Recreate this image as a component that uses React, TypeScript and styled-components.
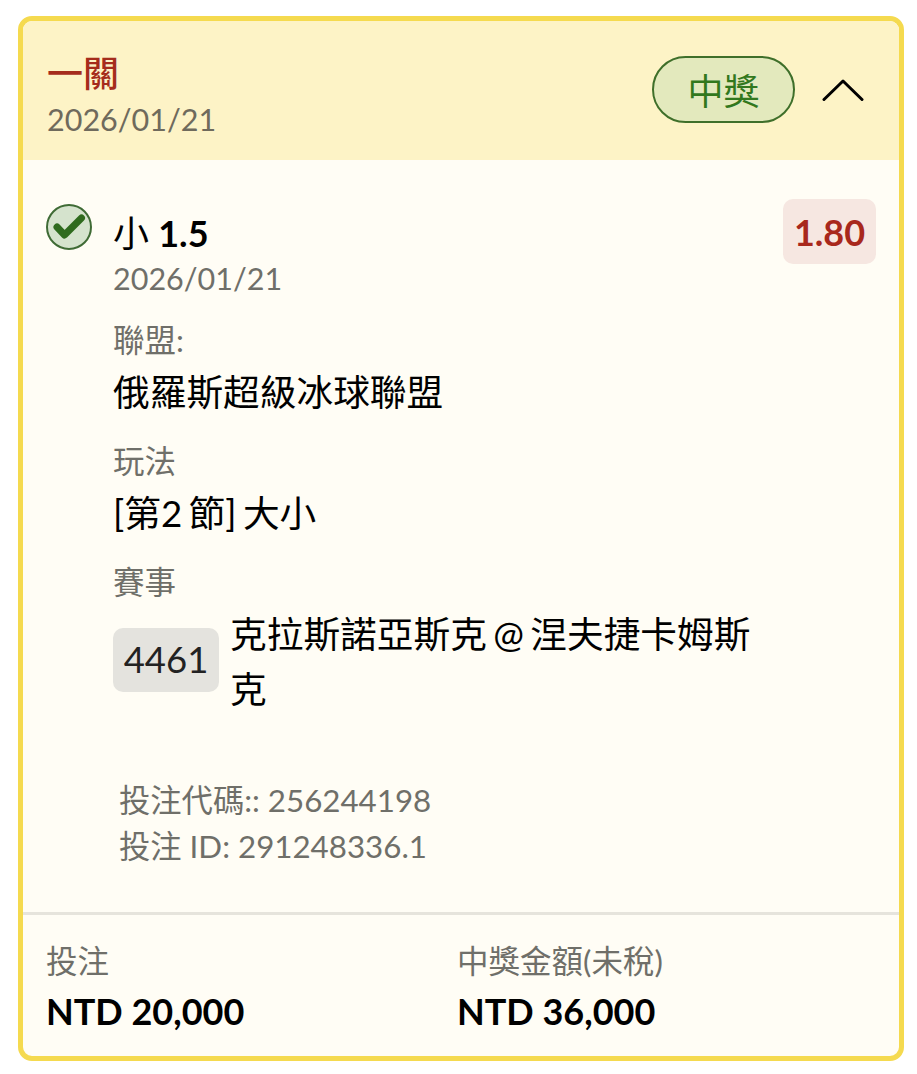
import React from 'react';
import styled, { createGlobalStyle } from 'styled-components';

const GlobalStyle = createGlobalStyle`
  html, body {
    margin: 0;
    padding: 0;
    background: #fff;
    font-family: Lato, "Noto Sans CJK TC", sans-serif;
  }
`;

const App = () => (
  <>
    <GlobalStyle />
    <Page>
      <Card>
        <Header>
          <div>
            <Title>一關</Title>
            <HeaderDate>2026/01/21</HeaderDate>
          </div>
          <HeaderRight>
            <StatusPill>中獎</StatusPill>
            <svg width="42" height="24" viewBox="0 0 42 24" fill="none">
              <path d="M2 21.5 L21 3 L40 21.5" stroke="#000" strokeWidth="3" strokeLinecap="round" strokeLinejoin="round" />
            </svg>
          </HeaderRight>
        </Header>
        <Body>
          <Selection>
            <CheckIcon width="46" height="46" viewBox="0 0 46 46">
              <circle cx="23" cy="23" r="22" fill="#d5e3cd" stroke="#3f6b35" strokeWidth="2" />
              <path d="M11 23 L18.5 31 L35.5 14" fill="none" stroke="#2f6b1e" strokeWidth="7" strokeLinecap="round" strokeLinejoin="round" />
            </CheckIcon>
            <SelectionText>
              <Pick>
                小 <b>1.5</b>
              </Pick>
              <SubDate>2026/01/21</SubDate>
            </SelectionText>
            <Odds>1.80</Odds>
          </Selection>
          <Details>
            <Field>
              <Label>聯盟:</Label>
              <Value>俄羅斯超級冰球聯盟</Value>
            </Field>
            <Field>
              <Label>玩法</Label>
              <Value>[第2 節] 大小</Value>
            </Field>
            <Field>
              <Label>賽事</Label>
              <EventRow>
                <EventCode>4461</EventCode>
                <EventName>克拉斯諾亞斯克 @ 涅夫捷卡姆斯克</EventName>
              </EventRow>
            </Field>
          </Details>
          <Codes>
            <div>投注代碼:: 256244198</div>
            <div>投注 ID: 291248336.1</div>
          </Codes>
        </Body>
        <Footer>
          <Amount>
            <Label>投注</Label>
            <Money>NTD 20,000</Money>
          </Amount>
          <Amount>
            <Label>中獎金額(未稅)</Label>
            <Money>NTD 36,000</Money>
          </Amount>
        </Footer>
      </Card>
    </Page>
  </>
);

const Page = styled.div`
  box-sizing: border-box;
  width: 917px;
  height: 1074px;
  padding: 16px 13px 13px 18px;
  overflow: hidden;
`;

const Card = styled.section`
  box-sizing: border-box;
  height: 1045px;
  border: 5px solid #f5da4f;
  border-radius: 14px;
  background: #fffdf5;
  overflow: hidden;
  display: flex;
  flex-direction: column;
`;

const Header = styled.header`
  box-sizing: border-box;
  height: 139px;
  flex: none;
  display: flex;
  align-items: flex-start;
  justify-content: space-between;
  padding: 29px 35px 0 24px;
  background: #fdf3c6;
`;

const Title = styled.div`
  font-size: 36px;
  line-height: 46px;
  font-weight: 500;
  color: #a52c1c;
`;

const HeaderDate = styled.div`
  font-size: 30.5px;
  line-height: 40px;
  margin-top: 3px;
  color: #6f6a5c;
`;

const HeaderRight = styled.div`
  display: flex;
  align-items: center;
  gap: 27px;
  margin-top: 6px;
`;

const StatusPill = styled.div`
  box-sizing: border-box;
  width: 143px;
  height: 67px;
  border: 2px solid #3f6f2a;
  border-radius: 34px;
  background: #e3e9bd;
  color: #32781d;
  font-size: 36px;
  line-height: 67px;
  text-align: center;
`;

const Body = styled.div`
  flex: 1;
  padding: 39px 23px 0 23px;
`;

const Selection = styled.div`
  display: flex;
  align-items: flex-start;
`;

const CheckIcon = styled.svg`
  flex: none;
  margin-top: 5px;
`;

const SelectionText = styled.div`
  flex: 1;
  margin-left: 21px;
`;

const Pick = styled.div`
  font-size: 36px;
  line-height: 49px;
  margin-top: 10px;
  color: #000;

  b {
    font-weight: 700;
  }
`;

const SubDate = styled.div`
  font-size: 30.5px;
  line-height: 40px;
  color: #6f6f69;
`;

const Odds = styled.div`
  box-sizing: border-box;
  width: 93px;
  height: 65px;
  border-radius: 10px;
  background: #f6e7e1;
  color: #a8281c;
  font-size: 36px;
  font-weight: 700;
  line-height: 67px;
  text-align: center;
`;

const Details = styled.div`
  margin: 21px 0 0 67px;
  display: flex;
  flex-direction: column;
  gap: 24px;
`;

const Field = styled.div`
  display: flex;
  flex-direction: column;
  gap: 7px;
`;

const Label = styled.div`
  font-size: 31.5px;
  line-height: 42px;
  color: #6f6f69;
`;

const Value = styled.div`
  font-size: 36.7px;
  line-height: 48px;
  word-spacing: -3px;
  color: #000;
`;

const EventRow = styled.div`
  display: flex;
  align-items: center;
  gap: 11px;
  width: 650px;
  margin-top: -7px;
`;

const EventCode = styled.div`
  flex: none;
  box-sizing: border-box;
  width: 106px;
  height: 64px;
  border-radius: 10px;
  background: #e4e3de;
  color: #222;
  font-size: 36.5px;
  line-height: 62px;
  text-align: center;
`;

const EventName = styled.div`
  margin-top: 4px;
  font-size: 36.7px;
  line-height: 55px;
  word-spacing: -3px;
  color: #000;
`;

const Codes = styled.div`
  margin: 60px 0 0 73px;
  font-size: 31.3px;
  line-height: 46px;
  color: #6f6f69;
`;

const Footer = styled.footer`
  box-sizing: border-box;
  height: 144px;
  flex: none;
  display: grid;
  grid-template-columns: 411px 1fr;
  padding: 25px 23px 0;
  border-top: 3px solid #e6e4dc;
`;

const Amount = styled.div`
  display: flex;
  flex-direction: column;
  gap: 6px;
`;

const Money = styled.div`
  font-size: 36px;
  line-height: 46px;
  font-weight: 700;
  color: #000;
`;

export default App;
